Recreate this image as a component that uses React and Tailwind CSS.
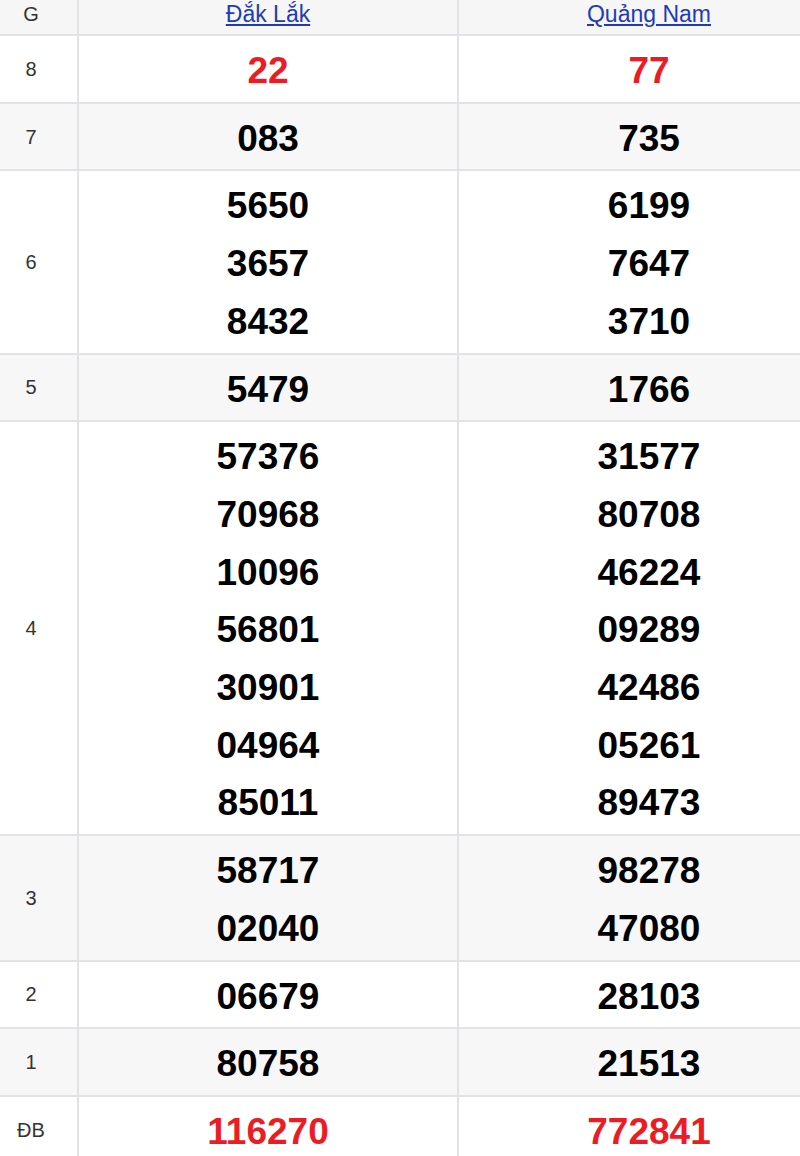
import React from "react";

const rows = [
  { g: "8", a: ["22"], b: ["77"], red: true },
  { g: "7", a: ["083"], b: ["735"] },
  { g: "6", a: ["5650", "3657", "8432"], b: ["6199", "7647", "3710"] },
  { g: "5", a: ["5479"], b: ["1766"] },
  {
    g: "4",
    a: ["57376", "70968", "10096", "56801", "30901", "04964", "85011"],
    b: ["31577", "80708", "46224", "09289", "42486", "05261", "89473"],
  },
  { g: "3", a: ["58717", "02040"], b: ["98278", "47080"] },
  { g: "2", a: ["06679"], b: ["28103"] },
  { g: "1", a: ["80758"], b: ["21513"] },
  { g: "ĐB", a: ["116270"], b: ["772841"], red: true },
];

function NumCell({ nums, red, last }) {
  return (
    <div
      className={
        "flex flex-col items-center justify-center pt-[6px] pb-[2px] " +
        (last ? "" : "border-r-2 border-[#e2e2e7]")
      }
    >
      {nums.map((n, i) => (
        <div
          key={i}
          className={
            "leading-[57.7px] text-[37px] font-bold " +
            (red ? "text-[#ec1c24]" : "text-black")
          }
        >
          {n}
        </div>
      ))}
    </div>
  );
}

export default function App() {
  return (
    <div
      className="w-[800px] h-[1156px] overflow-hidden bg-white"
      style={{ fontFamily: '"Liberation Sans", Arial, sans-serif' }}
    >
      <div className="w-[854px] -ml-[15px]">
        <div className="grid grid-cols-[94px_380px_380px] bg-[#f6f6f6] border-b-2 border-[#e2e2e7] h-[36px]">
          <div className="border-r-2 border-[#e2e2e7] text-center text-[20px] leading-[28px] text-[#333]">
            G
          </div>
          <div className="border-r-2 border-[#e2e2e7] text-center text-[23px] leading-[28px]">
            <a href="#" className="text-[#1f3bb8] underline">
              Đắk Lắk
            </a>
          </div>
          <div className="text-center text-[23px] leading-[28px]">
            <a href="#" className="text-[#1f3bb8] underline">
              Quảng Nam
            </a>
          </div>
        </div>
        {rows.map((r, i) => (
          <div
            key={i}
            className={
              "grid grid-cols-[94px_380px_380px] border-b-2 border-[#e2e2e7] " +
              (i % 2 === 1 ? "bg-[#f7f7f7]" : "bg-white")
            }
          >
            <div className="flex items-center justify-center border-r-2 border-[#e2e2e7] text-[20px] text-[#333]">
              {r.g}
            </div>
            <NumCell nums={r.a} red={r.red} />
            <NumCell nums={r.b} red={r.red} last />
          </div>
        ))}
      </div>
    </div>
  );
}
